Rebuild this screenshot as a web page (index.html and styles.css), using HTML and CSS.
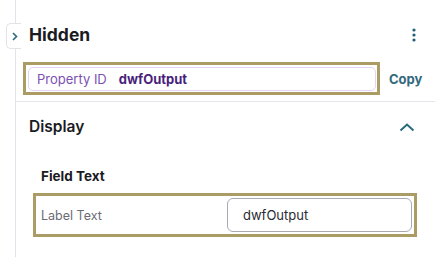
FILE: index.html
```html
<!DOCTYPE html>
<html lang="en">
<head>
    <meta charset="UTF-8">
    <meta name="viewport" content="width=device-width, initial-scale=1.0">
    <title>Hidden</title>
    <link rel="stylesheet" href="styles.css">
</head>
<body>
    <div class="tab">
        <svg width="6" height="9" viewBox="0 0 6 9"><path d="M1 1 L4.5 4.5 L1 8" fill="none" stroke="#286a80" stroke-width="1.6"/></svg>
    </div>
    <div class="panel">
        <div class="header">
            <h1>Hidden</h1>
            <svg class="kebab" width="4" height="14" viewBox="0 0 4 14">
                <circle cx="2" cy="2" r="1.6" fill="#1f6078"/>
                <circle cx="2" cy="7" r="1.6" fill="#1f6078"/>
                <circle cx="2" cy="12" r="1.6" fill="#1f6078"/>
            </svg>
        </div>
        <div class="id-row">
            <div class="highlight id-box">
                <div class="id-field">
                    <span class="id-label">Property ID</span>
                    <span class="id-value">dwfOutput</span>
                </div>
            </div>
            <button class="copy">Copy</button>
        </div>
        <div class="section">
            <div class="section-head">
                <h2>Display</h2>
                <svg width="16" height="9" viewBox="0 0 16 9"><path d="M1.5 7.5 L8 1.5 L14.5 7.5" fill="none" stroke="#286a80" stroke-width="2"/></svg>
            </div>
            <h3>Field Text</h3>
            <div class="highlight field-box">
                <label for="labelText">Label Text</label>
                <input type="text" id="labelText" value="dwfOutput">
            </div>
        </div>
    </div>
</body>
</html>
```

FILE: styles.css
```css
body {
    margin: 0;
    font-family: Inter, "Noto Sans", sans-serif;
    background: #fff;
    color: #1b1b23;
}
.tab {
    position: absolute;
    z-index: 1;
    left: 6px;
    top: 23px;
    width: 15px;
    height: 26px;
    border: 1px solid #e2e2e8;
    border-right: none;
    border-radius: 5px 0 0 5px;
    background: #fff;
    display: flex;
    align-items: center;
    justify-content: flex-end;
    padding-right: 3px;
    box-sizing: border-box;
}
.panel {
    margin-left: 15px;
    border-left: 1px solid #e2e2e8;
    height: 257px;
    box-sizing: border-box;
}
.header {
    height: 62px;
    padding: 24px 19px 0 13px;
    box-sizing: border-box;
    display: flex;
    justify-content: space-between;
    align-items: flex-start;
}
h1 {
    margin: 0;
    font-size: 17.5px;
    line-height: 22px;
    font-weight: 700;
}
.kebab {
    margin-top: 4px;
}
.id-row {
    display: flex;
    align-items: center;
    padding-left: 7px;
    padding-bottom: 6px;
    border-bottom: 1px solid #e5e5ec;
}
.highlight {
    border: 3px solid #ab9c66;
    box-sizing: border-box;
}
.id-box {
    width: 357px;
    height: 33px;
    padding: 2px 1px 1px 2px;
}
.id-field {
    height: 24px;
    border: 1px solid #e3d4f5;
    border-radius: 5px;
    box-sizing: border-box;
    display: flex;
    align-items: center;
    padding-left: 8px;
    font-size: 13px;
}
.id-label {
    color: #7c50b3;
    margin-right: 12px;
}
.id-value {
    color: #4a1f7c;
    font-weight: 700;
}
.copy {
    margin-left: 9px;
    padding: 0;
    border: none;
    background: none;
    font-family: inherit;
    font-size: 13px;
    font-weight: 700;
    color: #32697c;
    cursor: pointer;
}
.section {
    padding: 15px 0 0 13px;
}
.section-head {
    display: flex;
    justify-content: space-between;
    align-items: center;
    padding-right: 20px;
    height: 20px;
}
h2 {
    margin: 0;
    font-size: 15.5px;
    line-height: 20px;
    font-weight: 600;
}
h3 {
    margin: 30px 0 8px 12px;
    font-size: 13.5px;
    line-height: 18px;
    font-weight: 700;
}
.field-box {
    margin-left: 4px;
    width: 384px;
    height: 44px;
    padding: 2px 2px 2px 5px;
    display: flex;
    align-items: center;
    justify-content: space-between;
}
label {
    font-size: 12.5px;
    color: #6b6b75;
}
input[type="text"] {
    width: 185px;
    height: 34px;
    box-sizing: border-box;
    border: 1px solid #a9a9b3;
    border-radius: 6px;
    padding: 0 15px;
    font-family: inherit;
    font-size: 13px;
    color: #2a2a33;
}
```
